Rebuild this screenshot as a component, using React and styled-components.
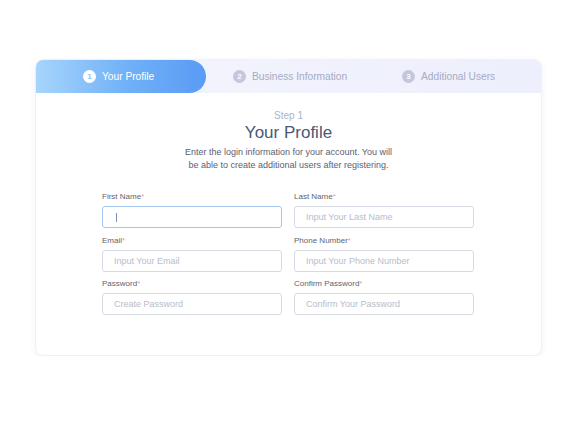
import styled, { createGlobalStyle } from "styled-components";

const GlobalStyle = createGlobalStyle`
  body {
    margin: 0;
    background: #ffffff;
    font-family: "Liberation Sans", Arial, sans-serif;
  }
`;

const Page = styled.main`
  padding: 59px 0 0 35px;
`;

const Card = styled.section`
  width: 507px;
  height: 297px;
  box-sizing: border-box;
  border-radius: 8px;
  border: 1px solid #eef1f6;
  box-shadow: 0 2px 6px rgba(180, 190, 230, 0.18);
  background: #fff;
  overflow: hidden;
`;

const Tabs = styled.nav`
  display: flex;
  height: 33px;
  background: linear-gradient(90deg, #f3f5fd 0%, #eeeffc 100%);
`;

const Tab = styled.div`
  display: flex;
  align-items: center;
  gap: 6px;
  box-sizing: border-box;
  flex: ${(p) => (p.$width ? `0 0 ${p.$width}px` : "1")};
  padding-left: ${(p) => p.$pad}px;
  font-size: 10.2px;
  color: ${(p) => (p.$active ? "#ffffff" : "#a7aac4")};
  background: ${(p) =>
    p.$active ? "linear-gradient(90deg, #a6d5fb 0%, #6fb0f7 55%, #5a9bf5 100%)" : "transparent"};
  border-radius: ${(p) => (p.$active ? "0 17px 17px 0" : "0")};
`;

const StepDot = styled.span`
  display: inline-flex;
  align-items: center;
  justify-content: center;
  width: 13px;
  height: 13px;
  border-radius: 50%;
  font-size: 8px;
  font-weight: 700;
  background: ${(p) => (p.$active ? "#ffffff" : "#c3c6de")};
  color: ${(p) => (p.$active ? "#8ec4f8" : "#ffffff")};
`;

const Header = styled.header`
  display: flex;
  flex-direction: column;
  align-items: center;
  padding-top: 16px;
`;

const StepLabel = styled.div`
  font-size: 10px;
  color: #a9b4c6;
  line-height: 13px;
`;

const Title = styled.h1`
  margin: 0;
  font-size: 17px;
  font-weight: 400;
  color: #4a5875;
  line-height: 22px;
`;

const Desc = styled.p`
  margin: 2px 0 0;
  font-size: 9px;
  line-height: 13px;
  color: #5b6170;
  text-align: center;
`;

const Form = styled.form`
  display: grid;
  grid-template-columns: 180px 180px;
  column-gap: 12px;
  row-gap: 7.5px;
  width: 372px;
  margin: 20px 0 0 66px;
`;

const Field = styled.label`
  display: flex;
  flex-direction: column;
  gap: 5px;
`;

const Label = styled.span`
  font-size: 8px;
  line-height: 9px;
  color: #60646e;

  &::after {
    content: "*";
    color: #f0a0a0;
  }
`;

const Input = styled.div`
  height: 22px;
  box-sizing: border-box;
  border: 1px solid ${(p) => (p.$focus ? "#a6c6ef" : "#d6dbe3")};
  border-radius: 3px;
  display: flex;
  align-items: center;
  padding-left: 11px;
  font-size: 9px;
  color: #b6bdcb;
`;

const Caret = styled.span`
  display: inline-block;
  width: 1px;
  height: 9px;
  margin-left: 2px;
  background: #7f93b5;
`;

const fields = [
  { label: "First Name", placeholder: "", focus: true },
  { label: "Last Name", placeholder: "Input Your Last Name" },
  { label: "Email", placeholder: "Input Your Email" },
  { label: "Phone Number", placeholder: "Input Your Phone Number" },
  { label: "Password", placeholder: "Create Password" },
  { label: "Confirm Password", placeholder: "Confirm Your Password" },
];

const steps = [
  { name: "Your Profile", width: 170, pad: 47 },
  { name: "Business Information", width: 169, pad: 27 },
  { name: "Additional Users", pad: 27 },
];

export default function App() {
  return (
    <>
      <GlobalStyle />
      <Page>
        <Card>
          <Tabs>
            {steps.map((s, i) => (
              <Tab key={s.name} $active={i === 0} $width={s.width} $pad={s.pad}>
                <StepDot $active={i === 0}>{i + 1}</StepDot>
                {s.name}
              </Tab>
            ))}
          </Tabs>
          <Header>
            <StepLabel>Step 1</StepLabel>
            <Title>Your Profile</Title>
            <Desc>
              Enter the login information for your account. You will
              <br />
              be able to create additional users after registering.
            </Desc>
          </Header>
          <Form>
            {fields.map((f) => (
              <Field key={f.label}>
                <Label>{f.label}</Label>
                <Input $focus={f.focus}>
                  {f.focus ? <Caret /> : f.placeholder}
                </Input>
              </Field>
            ))}
          </Form>
        </Card>
      </Page>
    </>
  );
}
